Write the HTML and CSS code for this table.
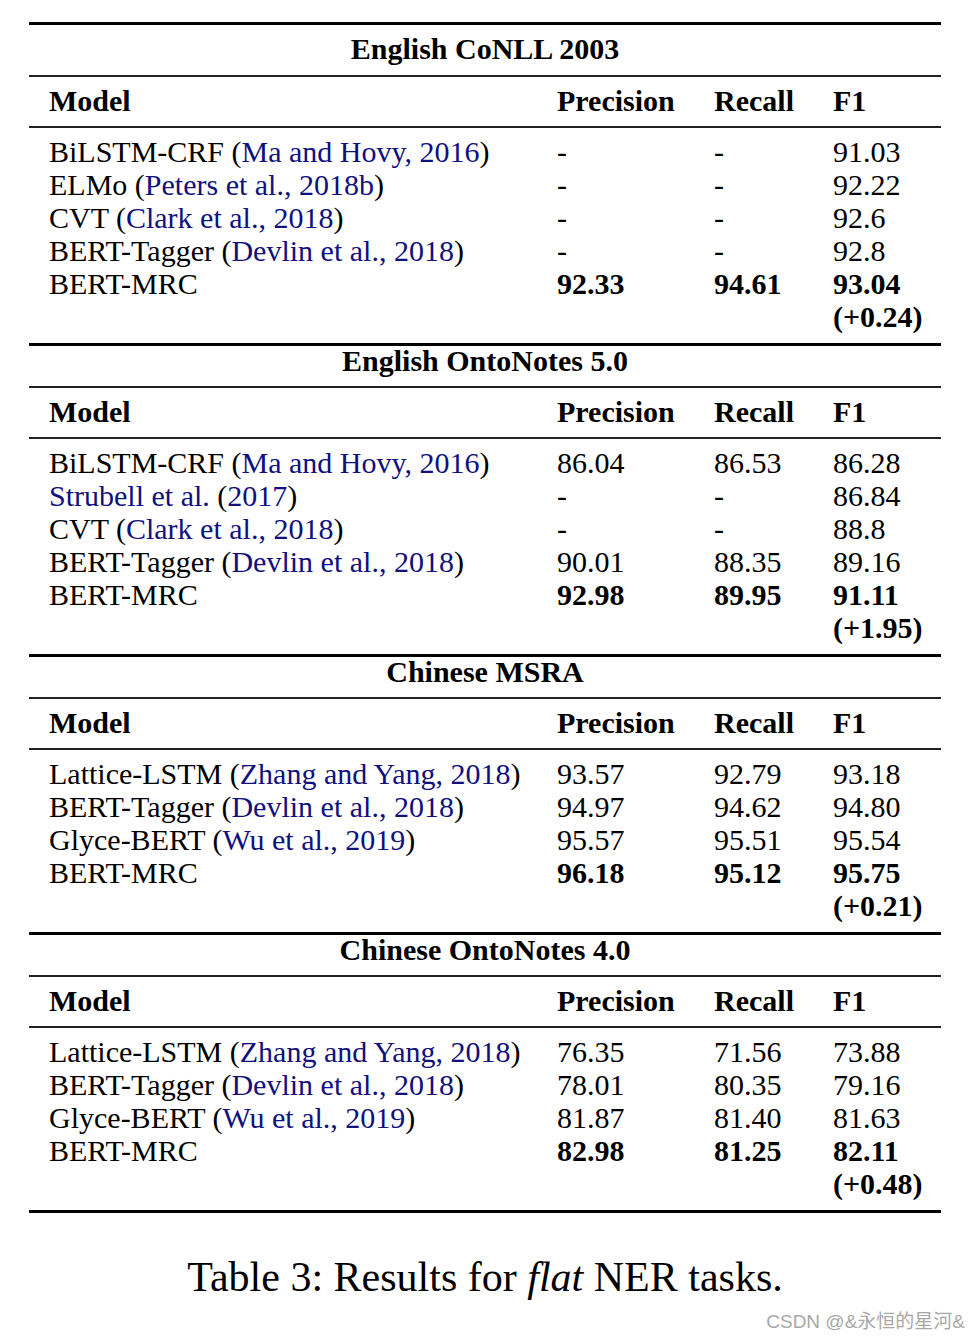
FILE: index.html
```html
<!DOCTYPE html>
<html>
<head>
<meta charset="utf-8">
<link rel="stylesheet" href="styles.css">
</head>
<body>
<div class="page">
  <div class="results">
    <section class="section">
      <div class="title">English CoNLL 2003</div>
      <div class="grid head"><span>Model</span><span>Precision</span><span>Recall</span><span>F1</span></div>
      <div class="grid body">
        <span>BiLSTM-CRF (<a>Ma and Hovy, 2016</a>)</span><span>-</span><span>-</span><span>91.03</span>
        <span>ELMo (<a>Peters et al., 2018b</a>)</span><span>-</span><span>-</span><span>92.22</span>
        <span>CVT (<a>Clark et al., 2018</a>)</span><span>-</span><span>-</span><span>92.6</span>
        <span>BERT-Tagger (<a>Devlin et al., 2018</a>)</span><span>-</span><span>-</span><span>92.8</span>
        <span>BERT-MRC</span><b>92.33</b><b>94.61</b><b>93.04<br>(+0.24)</b>
      </div>
    </section>
    <section class="section">
      <div class="title">English OntoNotes 5.0</div>
      <div class="grid head"><span>Model</span><span>Precision</span><span>Recall</span><span>F1</span></div>
      <div class="grid body">
        <span>BiLSTM-CRF (<a>Ma and Hovy, 2016</a>)</span><span>86.04</span><span>86.53</span><span>86.28</span>
        <span><a>Strubell et al.</a> (<a>2017</a>)</span><span>-</span><span>-</span><span>86.84</span>
        <span>CVT (<a>Clark et al., 2018</a>)</span><span>-</span><span>-</span><span>88.8</span>
        <span>BERT-Tagger (<a>Devlin et al., 2018</a>)</span><span>90.01</span><span>88.35</span><span>89.16</span>
        <span>BERT-MRC</span><b>92.98</b><b>89.95</b><b>91.11<br>(+1.95)</b>
      </div>
    </section>
    <section class="section">
      <div class="title">Chinese MSRA</div>
      <div class="grid head"><span>Model</span><span>Precision</span><span>Recall</span><span>F1</span></div>
      <div class="grid body">
        <span>Lattice-LSTM (<a>Zhang and Yang, 2018</a>)</span><span>93.57</span><span>92.79</span><span>93.18</span>
        <span>BERT-Tagger (<a>Devlin et al., 2018</a>)</span><span>94.97</span><span>94.62</span><span>94.80</span>
        <span>Glyce-BERT (<a>Wu et al., 2019</a>)</span><span>95.57</span><span>95.51</span><span>95.54</span>
        <span>BERT-MRC</span><b>96.18</b><b>95.12</b><b>95.75<br>(+0.21)</b>
      </div>
    </section>
    <section class="section">
      <div class="title">Chinese OntoNotes 4.0</div>
      <div class="grid head"><span>Model</span><span>Precision</span><span>Recall</span><span>F1</span></div>
      <div class="grid body">
        <span>Lattice-LSTM (<a>Zhang and Yang, 2018</a>)</span><span>76.35</span><span>71.56</span><span>73.88</span>
        <span>BERT-Tagger (<a>Devlin et al., 2018</a>)</span><span>78.01</span><span>80.35</span><span>79.16</span>
        <span>Glyce-BERT (<a>Wu et al., 2019</a>)</span><span>81.87</span><span>81.40</span><span>81.63</span>
        <span>BERT-MRC</span><b>82.98</b><b>81.25</b><b>82.11<br>(+0.48)</b>
      </div>
    </section>
  </div>
  <p class="caption">Table 3: Results for <i>flat</i> NER tasks.</p>
  <div class="watermark">CSDN @&amp;永恒的星河&amp;</div>
</div>
</body>
</html>
```

FILE: styles.css
```css
html, body {
  margin: 0;
  padding: 0;
  background: #fff;
}

.page {
  position: relative;
  box-sizing: border-box;
  width: 980px;
  height: 1340px;
  padding: 22px 0 0 29px;
  overflow: hidden;
  font-family: "Liberation Serif", "Times New Roman", serif;
  color: #000;
  font-size: 30px;
}

.results {
  width: 912px;
  border-top: 3px solid #000;
  border-bottom: 3px solid #000;
}

.section + .section {
  border-top: 3px solid #000;
}

.title {
  text-align: center;
  font-weight: bold;
  line-height: 30px;
  padding: 0 0 10px;
  border-bottom: 2px solid #222;
}

.section:first-child .title {
  padding-top: 9px;
  padding-bottom: 11px;
}

.grid {
  display: grid;
  grid-template-columns: 508px 157px 119px 1fr;
  padding-left: 20px;
  line-height: 33px;
}

.head {
  font-weight: bold;
  padding-top: 7px;
  padding-bottom: 9px;
  border-bottom: 2px solid #222;
}

.body {
  padding-top: 7px;
  padding-bottom: 10px;
}

.body span, .body b {
  white-space: nowrap;
}

.body a {
  color: #10107e;
  text-decoration: none;
}

.caption {
  width: 912px;
  margin: 40px 0 0;
  text-align: center;
  font-size: 42px;
  line-height: 48px;
}

.watermark {
  position: absolute;
  right: 15px;
  bottom: 7px;
  font-family: "Liberation Sans", "Noto Sans CJK SC", sans-serif;
  font-size: 19px;
  color: #a8a8a8;
}
```
